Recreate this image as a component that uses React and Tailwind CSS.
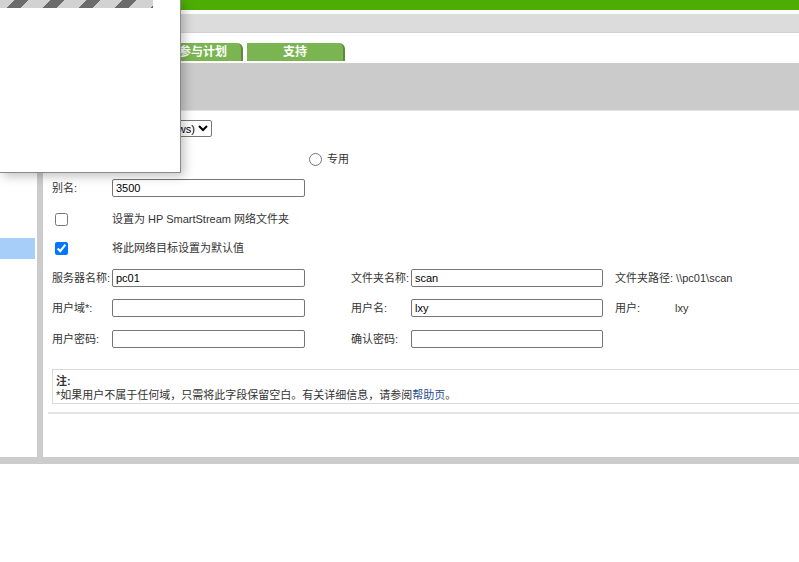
import React from "react";

function Field({ value = "", w = "w-[193px]" }) {
  return (
    <input
      readOnly
      value={value}
      className={`${w} h-[18px] border border-[#767676] rounded-[2px] px-[3px] text-[11px] text-black bg-white outline-none`}
    />
  );
}

function Label({ children }) {
  return <span className="w-[60px] shrink-0 whitespace-nowrap">{children}</span>;
}

export default function App() {
  return (
    <div className="relative w-[799px] h-[562px] overflow-hidden bg-white text-[11px] text-[#333] font-['Liberation_Sans','Noto_Sans_CJK_SC',sans-serif]">
      {/* header */}
      <div className="h-[10px] bg-[#4cae04]" />
      <div className="h-[4px]" />
      <div className="h-[19px] bg-[#dcdcdc] border-b border-[#d2d2d2]" />
      <div className="flex h-[28px] items-end pl-[165px] gap-[4px] text-[12px]">
        <div className="w-[78px] h-[18px] bg-[#7ab552] rounded-tr-[6px] border-r-2 border-[#5b8a3c] text-white font-bold flex items-center justify-center">
          参与计划
        </div>
        <div className="w-[98px] h-[18px] bg-[#7ab552] rounded-tr-[6px] border-r-2 border-[#5b8a3c] text-white font-bold flex items-center justify-center">
          支持
        </div>
      </div>
      <div className="h-[2px]" />
      <div className="h-[48px] bg-[#cbcbcb] border-b border-[#e2e2e2]" />

      {/* body */}
      <div className="flex h-[346px]">
        <div className="w-[37px] shrink-0">
          <div className="mt-[127px] h-[21px] w-[35px] bg-[#a6cef9]" />
        </div>
        <div className="w-[6px] shrink-0 bg-[#cccccc]" />
        <div className="flex-1 pl-[9px] pt-[9px] overflow-hidden">
          <div className="flex items-center h-[17px]">
            <Label>协议:</Label>
            <div className="w-[100px] flex justify-end">
              <select className="h-[17px] border border-[#767676] rounded-[2px] text-[11px] text-black bg-white">
                <option>SMB (Windows)</option>
              </select>
            </div>
          </div>

          <div className="flex items-center h-[24px] mt-[10px]">
            <Label>类型:</Label>
            <div className="w-[197px] flex items-center gap-[6px]">
              <input type="radio" defaultChecked className="w-[13px] h-[13px]" />
              <span>共享</span>
            </div>
            <div className="flex items-center gap-[5px]">
              <input type="radio" className="w-[13px] h-[13px]" />
              <span>专用</span>
            </div>
          </div>

          <div className="flex items-center h-[18px] mt-[8px]">
            <Label>别名:</Label>
            <Field value="3500" />
          </div>

          <div className="flex items-center h-[22px] mt-[11px]">
            <div className="w-[60px] shrink-0 pl-[3px]">
              <input type="checkbox" className="w-[13px] h-[13px] block" />
            </div>
            <span>设置为 HP SmartStream 网络文件夹</span>
          </div>

          <div className="flex items-center h-[22px] mt-[7px]">
            <div className="w-[60px] shrink-0 pl-[3px]">
              <input type="checkbox" defaultChecked className="w-[13px] h-[13px] block accent-[#0075ff]" />
            </div>
            <span>将此网络目标设置为默认值</span>
          </div>

          <div className="flex items-center h-[18px] mt-[10px]">
            <Label>服务器名称:</Label>
            <Field value="pc01" />
            <div className="w-[46px] shrink-0" />
            <Label>文件夹名称:</Label>
            <Field value="scan" w="w-[192px]" />
            <div className="w-[12px] shrink-0" />
            <span className="whitespace-nowrap">文件夹路径: \\pc01\scan</span>
          </div>

          <div className="flex items-center h-[18px] mt-[12px]">
            <Label>用户域*:</Label>
            <Field />
            <div className="w-[46px] shrink-0" />
            <Label>用户名:</Label>
            <Field value="lxy" w="w-[192px]" />
            <div className="w-[12px] shrink-0" />
            <Label>用户:</Label>
            <span>lxy</span>
          </div>

          <div className="flex items-center h-[18px] mt-[13px]">
            <Label>用户密码:</Label>
            <Field />
            <div className="w-[46px] shrink-0" />
            <Label>确认密码:</Label>
            <Field w="w-[192px]" />
          </div>

          <div className="mt-[21px] w-[780px] h-[35px] border border-[#d9d9d9] px-[3px] pt-[4px] leading-[14px]">
            <div className="font-bold">注:</div>
            <div>
              *如果用户不属于任何域，只需将此字段保留空白。有关详细信息，请参阅
              <span className="text-[#1f4f8f]">帮助页</span>。
            </div>
          </div>

          <div className="mt-[8px] -ml-[4px] h-[2px] bg-[#e3e3e3]" />
        </div>
      </div>
      <div className="h-[7px] bg-[#cccccc]" />

      {/* overlay popup */}
      <div className="absolute left-0 top-0 w-[181px] h-[173px] bg-white border-r border-b border-[#8a8a8a] shadow-[3px_3px_10px_rgba(0,0,0,0.25)]">
        <div className="h-[8px] w-[153px] bg-[repeating-linear-gradient(135deg,#d2d2d2_0_10px,#6b6b6b_10px_20px,#d2d2d2_20px_25.5px)]" />
      </div>
    </div>
  );
}
